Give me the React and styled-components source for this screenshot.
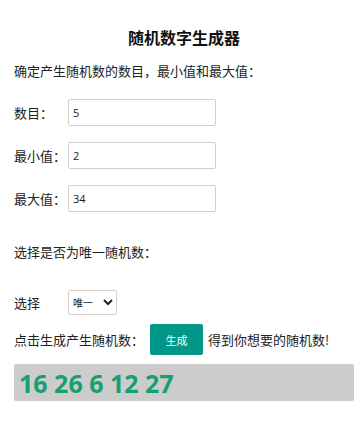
import styled, { createGlobalStyle } from 'styled-components';

const GlobalStyle = createGlobalStyle`
  body {
    margin: 0;
    background: #fff;
    font-family: "Noto Sans CJK SC", "Noto Sans", sans-serif;
    color: #222;
  }
`;

const Page = styled.div`
  padding: 0 6px 0 14px;
  display: flex;
  flex-direction: column;
`;

const Title = styled.h2`
  margin: 26px 0 0;
  font-size: 16px;
  line-height: 22px;
  font-weight: 700;
  text-align: center;
  color: #111;
`;

const Text = styled.p`
  margin: ${(p) => p.$top || 0}px 0 0;
  font-size: 13px;
  line-height: 20px;
`;

const Row = styled.div`
  display: flex;
  align-items: center;
  margin-top: ${(p) => p.$top}px;
  font-size: 13px;
`;

const Label = styled.span`
  width: 54px;
  flex-shrink: 0;
  white-space: nowrap;
`;

const Field = styled.input`
  box-sizing: border-box;
  width: 148px;
  height: 27px;
  border: 1px solid #d9cdc6;
  border-radius: 2px;
  padding: 0 4px;
  font-family: "Open Sans", sans-serif;
  font-size: 11px;
  color: #222;
  outline: none;
`;

const Select = styled.select`
  box-sizing: border-box;
  width: 49px;
  height: 25px;
  border: 1px solid #d9cdc6;
  border-radius: 2px;
  background: #fff;
  font-family: "Noto Sans CJK SC", sans-serif;
  font-size: 10px;
  color: #222;
  padding: 0;
`;

const Button = styled.button`
  height: 31px;
  width: 53px;
  margin: 0 5px 0 6px;
  border: none;
  border-radius: 2px;
  background: #009688;
  color: #fff;
  font-family: "Noto Sans CJK SC", sans-serif;
  font-size: 11px;
`;

const Result = styled.div`
  margin-top: 9px;
  height: 37px;
  background: #cccccc;
  border-radius: 2px;
  display: flex;
  align-items: center;
  padding-left: 5px;
  font-family: "Open Sans", sans-serif;
  font-weight: 700;
  font-size: 25px;
  color: #16a06c;
`;

export default function App() {
  return (
    <>
      <GlobalStyle />
      <Page>
        <Title>随机数字生成器</Title>
        <Text $top={13}>确定产生随机数的数目，最小值和最大值：</Text>
        <Row $top={18}>
          <Label>数目：</Label>
          <Field defaultValue="5" />
        </Row>
        <Row $top={16}>
          <Label>最小值：</Label>
          <Field defaultValue="2" />
        </Row>
        <Row $top={16}>
          <Label>最大值：</Label>
          <Field defaultValue="34" />
        </Row>
        <Text $top={30}>选择是否为唯一随机数：</Text>
        <Row $top={28}>
          <Label>选择</Label>
          <Select defaultValue="unique">
            <option value="unique">唯一</option>
            <option value="repeat">可重复</option>
          </Select>
        </Row>
        <Row $top={9}>
          <span>点击生成产生随机数：</span>
          <Button>生成</Button>
          <span>得到你想要的随机数!</span>
        </Row>
        <Result>16 26 6 12 27</Result>
      </Page>
    </>
  );
}
